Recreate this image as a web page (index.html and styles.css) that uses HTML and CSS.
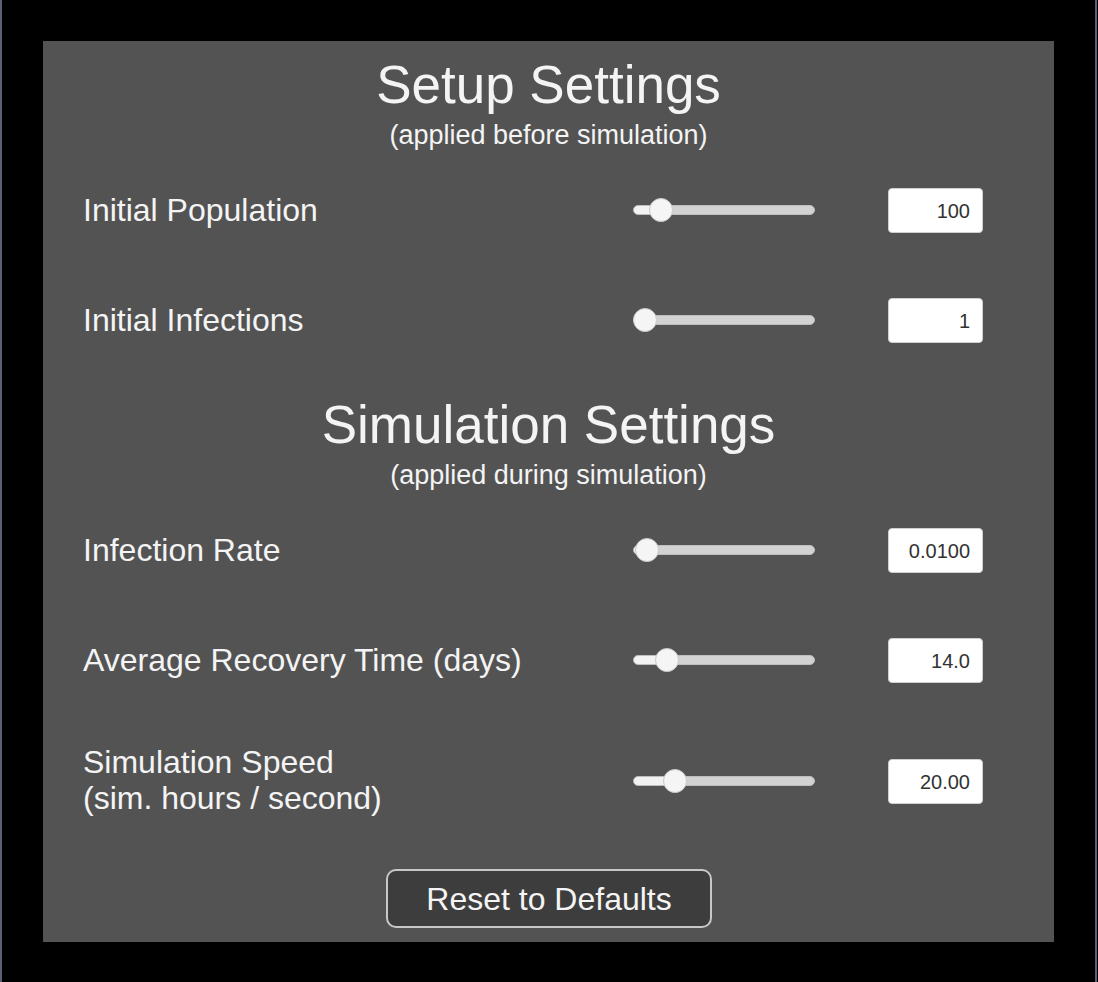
FILE: index.html
```html
<!DOCTYPE html>
<html lang="en">
<head>
<meta charset="utf-8">
<title>Settings</title>
<link rel="stylesheet" href="styles.css">
</head>
<body>
<div class="frame">
  <main class="panel">
    <header class="section-head">
      <h1 class="title">Setup Settings</h1>
      <p class="subtitle">(applied before simulation)</p>
    </header>
    <div class="row">
      <div class="label">Initial Population</div>
      <div class="slider" style="--p:0.104"><div class="track"><div class="fill"></div></div><div class="handle"></div></div>
      <div class="value">100</div>
    </div>
    <div class="row">
      <div class="label">Initial Infections</div>
      <div class="slider" style="--p:0"><div class="track"><div class="fill"></div></div><div class="handle"></div></div>
      <div class="value">1</div>
    </div>

    <header class="section-head section-head--later">
      <h1 class="title">Simulation Settings</h1>
      <p class="subtitle">(applied during simulation)</p>
    </header>
    <div class="row">
      <div class="label">Infection Rate</div>
      <div class="slider" style="--p:0.013"><div class="track"><div class="fill"></div></div><div class="handle"></div></div>
      <div class="value">0.0100</div>
    </div>
    <div class="row">
      <div class="label">Average Recovery Time (days)</div>
      <div class="slider" style="--p:0.14"><div class="track"><div class="fill"></div></div><div class="handle"></div></div>
      <div class="value">14.0</div>
    </div>
    <div class="row row--tall">
      <div class="label label--two">Simulation Speed<br>(sim. hours / second)</div>
      <div class="slider" style="--p:0.193"><div class="track"><div class="fill"></div></div><div class="handle"></div></div>
      <div class="value">20.00</div>
    </div>

    <div class="actions">
      <button class="reset" type="button">Reset to Defaults</button>
    </div>
  </main>
</div>
</body>
</html>
```

FILE: styles.css
```css
html, body {
  margin: 0;
  padding: 0;
  background: #000;
}

body {
  width: 1098px;
  height: 982px;
  overflow: hidden;
  font-family: "Liberation Sans", Arial, sans-serif;
  color: #f4f4f4;
}

.frame {
  box-sizing: border-box;
  width: 1097px;
  height: 982px;
  border-left: 2px solid #5b6172;
  border-right: 2px solid #5b6172;
  padding-top: 41px;
  padding-left: 41px;
}

.panel {
  box-sizing: border-box;
  width: 1011px;
  height: 901px;
  background: #535353;
  padding: 14px 71px 0 40px;
  display: flex;
  flex-direction: column;
}

.section-head {
  display: flex;
  flex-direction: column;
  align-items: center;
  margin: 0 0 4px 0;
  padding-left: 31px;
  flex-shrink: 0;
}

.section-head--later {
  margin-top: 20px;
}

.title {
  margin: 0;
  font-size: 53px;
  line-height: 60px;
  font-weight: normal;
  white-space: nowrap;
}

.subtitle {
  margin: 4px 0 0 0;
  font-size: 27px;
  line-height: 32px;
  white-space: nowrap;
}

.row {
  height: 110px;
  flex-shrink: 0;
  display: flex;
  align-items: center;
}

.row--tall {
  height: 132px;
}

.label {
  flex: 1;
  font-size: 32px;
  line-height: 34px;
  white-space: nowrap;
}

.label--two {
  line-height: 36px;
  margin-top: -2px;
}

.slider {
  position: relative;
  width: 182px;
  height: 24px;
  margin-right: 73px;
  display: flex;
  align-items: center;
}

.track {
  position: relative;
  box-sizing: border-box;
  width: 182px;
  height: 10px;
  border-radius: 5px;
  background: #d2d2d2;
  border: 1px solid #bdbdbd;
  overflow: hidden;
}

.fill {
  position: absolute;
  left: 0;
  top: 0;
  bottom: 0;
  width: calc(12px + var(--p) * 158px);
  background: #f2f2f2;
  border-radius: 5px 0 0 5px;
}

.handle {
  position: absolute;
  top: 0;
  left: calc(var(--p) * 158px);
  box-sizing: border-box;
  width: 24px;
  height: 24px;
  border-radius: 50%;
  background: #f5f5f5;
  border: 1px solid #c9c9c9;
}

.value {
  box-sizing: border-box;
  width: 95px;
  height: 45px;
  background: #ffffff;
  border: 1px solid #cfcfcf;
  border-radius: 4px;
  color: #323232;
  font-size: 20px;
  line-height: 45px;
  padding: 2px 12px 0 0;
  text-align: right;
  display: flex;
  align-items: center;
  justify-content: flex-end;
}

.actions {
  display: flex;
  justify-content: center;
  margin-top: 22px;
  padding-left: 32px;
  flex-shrink: 0;
}

.reset {
  box-sizing: border-box;
  width: 326px;
  height: 59px;
  background: #3d3d3d;
  border: 2px solid #c8c8c8;
  border-radius: 10px;
  color: #f4f4f4;
  font-family: "Liberation Sans", Arial, sans-serif;
  font-size: 32px;
  line-height: 1;
  padding: 0;
  cursor: pointer;
}
```
